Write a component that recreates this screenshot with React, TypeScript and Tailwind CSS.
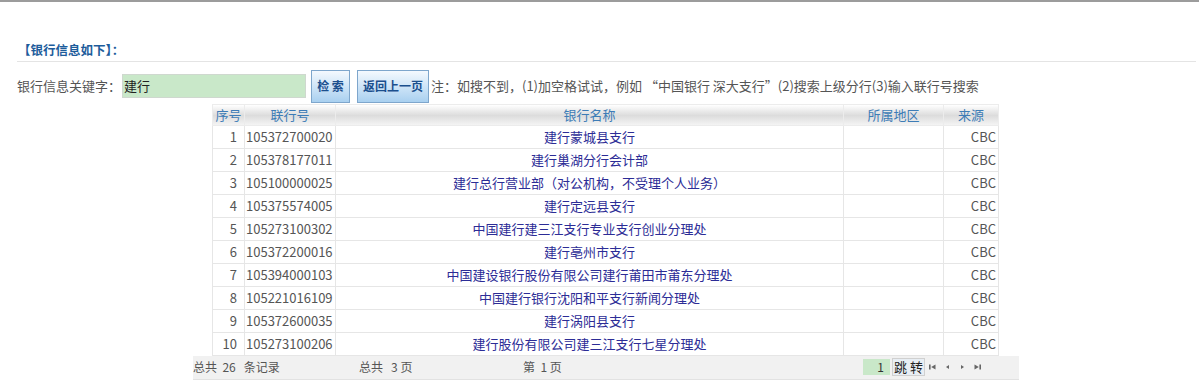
import React from "react";

const rows = [
  ["1", "105372700020", "建行蒙城县支行"],
  ["2", "105378177011", "建行巢湖分行会计部"],
  ["3", "105100000025", "建行总行营业部（对公机构，不受理个人业务）"],
  ["4", "105375574005", "建行定远县支行"],
  ["5", "105273100302", "中国建行建三江支行专业支行创业分理处"],
  ["6", "105372200016", "建行亳州市支行"],
  ["7", "105394000103", "中国建设银行股份有限公司建行莆田市莆东分理处"],
  ["8", "105221016109", "中国建行银行沈阳和平支行新闻分理处"],
  ["9", "105372600035", "建行涡阳县支行"],
  ["10", "105273100206", "建行股份有限公司建三江支行七星分理处"],
];

function PagerIcon({ kind }: { kind: "first" | "prev" | "next" | "last" }) {
  return (
    <svg width="9" height="10" viewBox="0 0 9 10" className="fill-[#666]">
      {kind === "first" && (
        <>
          <rect x="1" y="2.5" width="1.6" height="5" />
          <path d="M7.5 2.5 L3.2 5 L7.5 7.5 Z" />
        </>
      )}
      {kind === "prev" && <path d="M6 3 L3 5 L6 7 Z" />}
      {kind === "next" && <path d="M3 3 L6 5 L3 7 Z" />}
      {kind === "last" && (
        <>
          <path d="M1.5 2.5 L5.8 5 L1.5 7.5 Z" />
          <rect x="6.4" y="2.5" width="1.6" height="5" />
        </>
      )}
    </svg>
  );
}

export default function App() {
  return (
    <div className="w-[1199px] h-[387px] bg-white border-t-2 border-[#9c9c9c] font-['Noto_Sans_CJK_SC','Noto_Sans',sans-serif] text-[13px] text-[#444] overflow-hidden">
      <div className="px-[17px] pt-[38px]">
        <div className="h-[22px] mr-[-14px] leading-[20px] text-[12.5px] font-bold text-[#1d5c9b] pl-[1px] border-b border-[#e4e4e4]">
          【银行信息如下】：
        </div>

        <div className="flex items-center h-[34px] mt-[7px]">
          <span className="text-[#555] w-[105px]">银行信息关键字：</span>
          <div className="w-[184px] h-[24px] bg-[#c9e8c9] border border-[#cfd8cf] flex items-center px-[1px] text-[#222]">
            建行
          </div>
          <button className="ml-[5px] h-[33px] w-[39px] border border-[#7ea6cc] bg-gradient-to-b from-[#f4f9fe] to-[#a9d0f0] text-[12px] font-bold text-[#1b4f8e]">
            检 索
          </button>
          <button className="ml-[7px] h-[33px] w-[72px] border border-[#7ea6cc] bg-gradient-to-b from-[#f4f9fe] to-[#a9d0f0] text-[12px] font-bold text-[#1b4f8e]">
            返回上一页
          </button>
          <span className="ml-[2px] text-[#555]">
            注：如搜不到，(1)加空格试试，例如 “中国银行 深大支行”(2)搜索上级分行(3)输入联行号搜索
          </span>
        </div>
      </div>

      <div className="ml-[193px] w-[826px] mt-[1px]">
        <table className="ml-[19px] w-[786px] border-collapse table-fixed">
          <colgroup>
            <col className="w-[32px]" />
            <col className="w-[91px]" />
            <col className="w-[508px]" />
            <col className="w-[100px]" />
            <col className="w-[55px]" />
          </colgroup>
          <thead>
            <tr className="h-[20px] bg-gradient-to-b from-[#ffffff] via-[#dcdcdc] to-[#f6f6f6] text-[#3d7cb6]">
              <th className="font-normal border border-[#ececec] text-center p-0">序号</th>
              <th className="font-normal border border-[#ececec] text-center p-0">联行号</th>
              <th className="font-normal border border-[#ececec] text-center p-0">银行名称</th>
              <th className="font-normal border border-[#ececec] text-center p-0">所属地区</th>
              <th className="font-normal border border-[#ececec] text-center p-0">来源</th>
            </tr>
          </thead>
          <tbody>
            {rows.map((r) => (
              <tr key={r[0]} className="h-[23px]">
                <td className="border border-[#e6e6e6] text-right pr-[7px] p-0 text-[#555]">{r[0]}</td>
                <td className="border border-[#e6e6e6] pl-[1px] p-0 text-[#555]">{r[1]}</td>
                <td className="border border-[#e6e6e6] text-center p-0 text-[#2c2c96]">{r[2]}</td>
                <td className="border border-[#e6e6e6] p-0"></td>
                <td className="border border-[#e6e6e6] text-right pr-[2px] p-0 text-[#555]">CBC</td>
              </tr>
            ))}
          </tbody>
        </table>

        <div className="h-[24px] bg-[#f1f1f1] border-b border-[#e2e2e2] flex items-center text-[12px] text-[#555]">
          <span className="w-[166px]">总共&nbsp;&nbsp;26&nbsp;&nbsp;&nbsp;条记录</span>
          <span className="w-[164px]">总共&nbsp;&nbsp;&nbsp;3 页</span>
          <span className="w-[340px]">第&nbsp;&nbsp;1 页</span>
          <div className="w-[27px] h-[16px] bg-[#c9e8c9] text-right pr-[6px] leading-[16px] text-[#333]">1</div>
          <div className="ml-[2px] h-[18px] px-[1px] whitespace-nowrap shrink-0 bg-[#e8eef4] border border-[#d0d0d0] leading-[16px] text-[13px] text-[#222]">跳 转</div>
          <div className="flex items-center gap-[6px] ml-[3px]">
            <PagerIcon kind="first" />
            <PagerIcon kind="prev" />
            <PagerIcon kind="next" />
            <PagerIcon kind="last" />
          </div>
        </div>
      </div>
    </div>
  );
}
